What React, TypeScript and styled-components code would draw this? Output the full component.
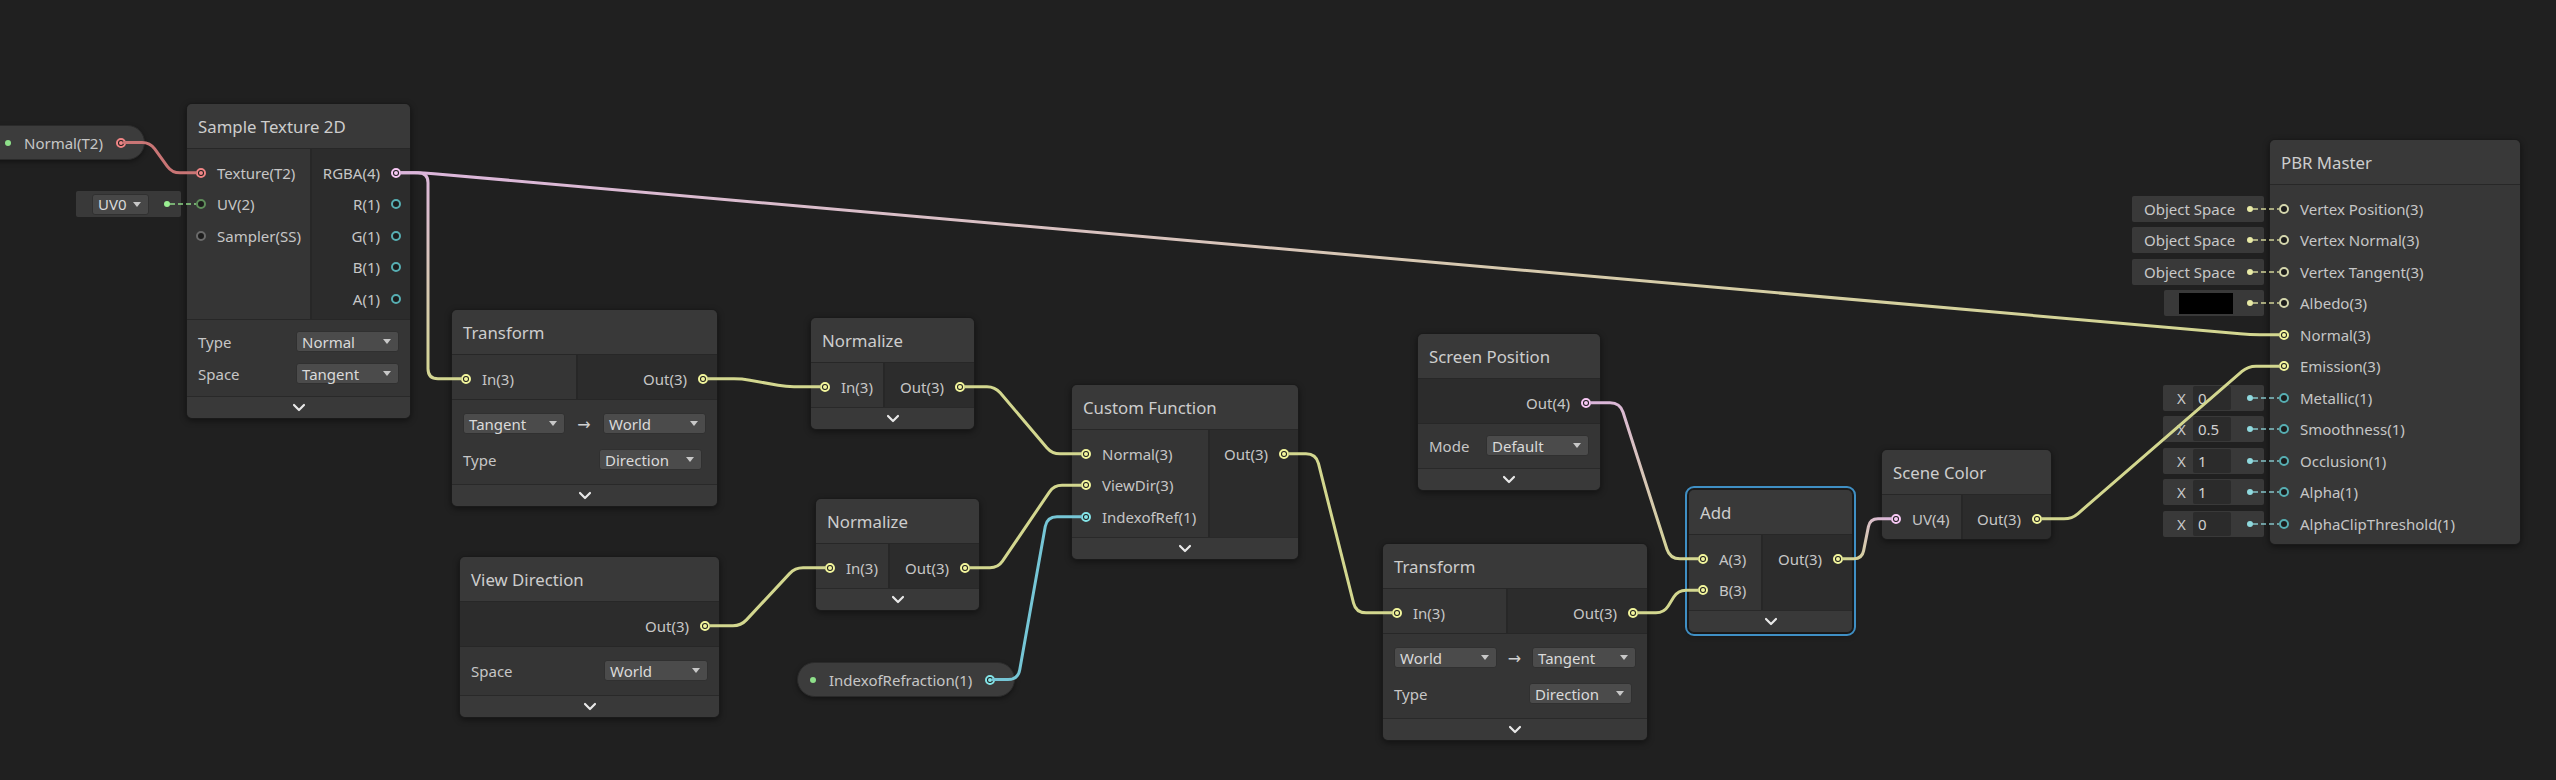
import React from "react";
import styled, { createGlobalStyle, css } from "styled-components";

type PT = "v1" | "v2" | "v3" | "v4" | "tex" | "ss";

const PORT: Record<PT, string> = {
  v1: "#84e4e7",
  v2: "#9aef92",
  v3: "#f2f59c",
  v4: "#f7c8f4",
  tex: "#f08585",
  ss: "#9a9a9a",
};
const DIM: Record<PT, string> = {
  v1: "#57aeb2",
  v2: "#5f8f5b",
  v3: "#d4d6ad",
  v4: "#c9a3c6",
  tex: "#b06060",
  ss: "#6a6a6a",
};
const WIRE: Record<PT, string> = {
  v1: "#76c6d6",
  v2: "#8ed489",
  v3: "#d3d78f",
  v4: "#dcb6dc",
  tex: "#c97575",
  ss: "#8a8a8a",
};

const GlobalStyle = createGlobalStyle`
  html, body { margin: 0; padding: 0; background: #202020; }
  body { font-family: "Noto Sans", "DejaVu Sans", sans-serif; }
  #root { width: 2556px; height: 780px; }
`;

const Canvas = styled.div`
  position: relative;
  width: 2556px;
  height: 780px;
  overflow: hidden;
  background: #202020;
`;

const NodeBox = styled.div<{ $x: number; $y: number; $w: number; $sel?: boolean }>`
  position: absolute;
  left: ${(p) => p.$x}px;
  top: ${(p) => p.$y}px;
  width: ${(p) => p.$w}px;
  box-sizing: border-box;
  border: 1px solid #1a1a1a;
  border-radius: 6px;
  background: #2c2c2c;
  box-shadow: 0 2px 6px rgba(0, 0, 0, 0.45);
  ${(p) =>
    p.$sel &&
    css`
      outline: 2px solid #3f8fc4;
      outline-offset: 1px;
    `}
`;

const NodeInner = styled.div`
  border-radius: 5px;
  overflow: hidden;
  display: flex;
  flex-direction: column;
`;

const Title = styled.div`
  height: 44px;
  border-bottom: 1px solid #272727;
  background: #393939;
  display: flex;
  align-items: center;
  padding-left: 11px;
  font-size: 16.8px;
  color: #cdcdcd;
  white-space: nowrap;
`;

const Ports = styled.div`
  display: flex;
`;

const InCol = styled.div<{ $w?: number; $solo?: boolean }>`
  ${(p) => (p.$w ? `flex: 0 0 ${p.$w - 1}px;` : "flex: 1;")}
  box-sizing: border-box;
  background: ${(p) => (p.$solo ? "#373737" : "#353535")};
  padding: 8px 0 4px;
  ${(p) => !p.$solo && "border-right: 2px solid #272727;"}
`;

const OutCol = styled.div`
  flex: 1;
  background: #2c2c2c;
  padding: 8px 0 4px;
`;

const PortRow = styled.div<{ $out?: boolean }>`
  height: 31.5px;
  display: flex;
  align-items: center;
  gap: 11px;
  padding: 0 9px;
  justify-content: ${(p) => (p.$out ? "flex-end" : "flex-start")};
  font-size: 15px;
  color: #c6c6c6;
  white-space: nowrap;
`;

const PortDot = styled.span<{ $c: string; $on?: boolean }>`
  flex: none;
  width: 10px;
  height: 10px;
  box-sizing: border-box;
  border-radius: 50%;
  border: 2px solid ${(p) => p.$c};
  background: #1c1c1c;
  position: relative;
  &::after {
    content: "";
    position: absolute;
    left: 1px;
    top: 1px;
    width: 4px;
    height: 4px;
    border-radius: 50%;
    background: ${(p) => (p.$on ? p.$c : "transparent")};
  }
`;

const Settings = styled.div`
  background: #353535;
  border-top: 1px solid #272727;
  padding: 6px 11px;
`;

const SettingRow = styled.div<{ $h: number }>`
  height: ${(p) => p.$h}px;
  display: flex;
  align-items: center;
  justify-content: space-between;
  font-size: 15px;
  color: #c6c6c6;
  white-space: nowrap;
`;

const Dropdown = styled.div<{ $w: number; $mr?: number }>`
  width: ${(p) => p.$w}px;
  height: 21px;
  box-sizing: border-box;
  margin-right: ${(p) => p.$mr ?? 0}px;
  display: flex;
  align-items: center;
  justify-content: space-between;
  padding: 0 7px 0 5px;
  background: #4b4b4b;
  border: 1px solid #303030;
  border-radius: 3px;
  font-size: 15px;
  color: #dadada;
  &::after {
    content: "";
    border-left: 4px solid transparent;
    border-right: 4px solid transparent;
    border-top: 5px solid #c8c8c8;
  }
`;

const Arrow = styled.span`
  font-size: 16px;
  color: #d0d0d0;
`;

const Collapse = styled.div`
  height: 21px;
  border-top: 1px solid #292929;
  background: #393939;
  display: flex;
  align-items: center;
  justify-content: center;
`;

const InlineColumn = styled.div`
  position: absolute;
  right: calc(100% + 6px);
  top: 53px;
  display: flex;
  flex-direction: column;
  align-items: flex-end;
`;

const InlineSlot = styled.div`
  height: 31.5px;
  display: flex;
  align-items: center;
`;

const InlineField = styled.div<{ $w: number; $pl?: number }>`
  position: relative;
  width: ${(p) => p.$w}px;
  height: 26px;
  box-sizing: border-box;
  background: #393939;
  border-radius: 2px;
  display: flex;
  align-items: center;
  padding-left: ${(p) => p.$pl ?? 0}px;
  font-size: 15px;
  color: #c8c8c8;
  white-space: nowrap;
`;

const Link = styled.span<{ $c: string }>`
  position: absolute;
  right: 11px;
  top: 10px;
  width: 6px;
  height: 6px;
  border-radius: 50%;
  background: ${(p) => p.$c};
  &::after {
    content: "";
    position: absolute;
    left: 6px;
    top: 2px;
    width: 26px;
    height: 2px;
    background: repeating-linear-gradient(90deg, ${(p) => p.$c} 0 5px, transparent 5px 8px);
    opacity: 0.65;
  }
`;

const Swatch = styled.span`
  margin-left: 15px;
  width: 54px;
  height: 21px;
  background: #000;
`;

const XLabel = styled.span`
  margin-left: 14px;
  width: 16px;
  color: #c8c8c8;
`;

const NumBox = styled.span`
  width: 38px;
  height: 24px;
  box-sizing: border-box;
  padding-left: 5px;
  display: flex;
  align-items: center;
  background: #2b2b2b;
  border-radius: 2px;
  color: #d0d0d0;
`;

const SmallDrop = styled(Dropdown)`
  margin-left: 16px;
  background: #474747;
`;

const Pill = styled.div<{ $x: number; $y: number; $w: number; $pl: number }>`
  position: absolute;
  left: ${(p) => p.$x}px;
  top: ${(p) => p.$y}px;
  width: ${(p) => p.$w}px;
  height: 35px;
  box-sizing: border-box;
  border-radius: 18px;
  background: #3c3c3c;
  border: 1px solid #2a2a2a;
  box-shadow: 0 2px 5px rgba(0, 0, 0, 0.4);
  display: flex;
  align-items: center;
  gap: 13px;
  padding: 0 20px 0 ${(p) => p.$pl}px;
  font-size: 15px;
  color: #c6c6c6;
  white-space: nowrap;
`;

const PillLabel = styled.span`
  flex: 1;
`;

const PropDot = styled.span`
  flex: none;
  width: 6px;
  height: 6px;
  border-radius: 50%;
  background: #8ee08a;
`;

const Wires = styled.svg`
  position: absolute;
  left: 0;
  top: 0;
  width: 2556px;
  height: 780px;
  pointer-events: none;
  z-index: 2;
`;

const Chevron = () => (
  <svg width="14" height="9" viewBox="0 0 14 9">
    <path d="M2 2 L7 7 L12 2" fill="none" stroke="#e8e8e8" strokeWidth="2.2" strokeLinecap="round" strokeLinejoin="round" />
  </svg>
);

interface PortDef {
  label: string;
  t: PT;
  on?: boolean;
  inline?: React.ReactNode;
}

interface NodeProps {
  x: number;
  y: number;
  w: number;
  title: string;
  inW?: number;
  inputs?: PortDef[];
  outputs?: PortDef[];
  collapse?: boolean;
  selected?: boolean;
  children?: React.ReactNode;
}

function GraphNode({ x, y, w, title, inW, inputs = [], outputs = [], collapse = true, selected, children }: NodeProps) {
  const hasInline = inputs.some((p) => p.inline);
  return (
    <NodeBox $x={x} $y={y} $w={w} $sel={selected}>
      {hasInline && (
        <InlineColumn>
          {inputs.map((p, i) => (
            <InlineSlot key={i}>{p.inline}</InlineSlot>
          ))}
        </InlineColumn>
      )}
      <NodeInner>
        <Title>{title}</Title>
        <Ports>
          {inputs.length > 0 && (
            <InCol $w={outputs.length ? inW : undefined} $solo={outputs.length === 0}>
              {inputs.map((p, i) => (
                <PortRow key={i}>
                  <PortDot $c={p.on ? PORT[p.t] : DIM[p.t]} $on={p.on} />
                  <span>{p.label}</span>
                </PortRow>
              ))}
            </InCol>
          )}
          {outputs.length > 0 && (
            <OutCol>
              {outputs.map((p, i) => (
                <PortRow key={i} $out>
                  <span>{p.label}</span>
                  <PortDot $c={p.on ? PORT[p.t] : DIM[p.t]} $on={p.on} />
                </PortRow>
              ))}
            </OutCol>
          )}
        </Ports>
        {children && <Settings>{children}</Settings>}
        {collapse && (
          <Collapse>
            <Chevron />
          </Collapse>
        )}
      </NodeInner>
    </NodeBox>
  );
}

type Pt = [number, number];

function wirePath(pts: Pt[], r = 10): string {
  let d = `M${pts[0][0]},${pts[0][1]}`;
  for (let i = 1; i < pts.length - 1; i++) {
    const [px, py] = pts[i - 1];
    const [cx, cy] = pts[i];
    const [nx, ny] = pts[i + 1];
    const l1 = Math.hypot(cx - px, cy - py);
    const l2 = Math.hypot(nx - cx, ny - cy);
    const rr = Math.min(r, l1 / 2, l2 / 2);
    const ax = cx - ((cx - px) / l1) * rr;
    const ay = cy - ((cy - py) / l1) * rr;
    const bx = cx + ((nx - cx) / l2) * rr;
    const by = cy + ((ny - cy) / l2) * rr;
    d += ` L${ax},${ay} Q${cx},${cy} ${bx},${by}`;
  }
  const last = pts[pts.length - 1];
  d += ` L${last[0]},${last[1]}`;
  return d;
}

interface Edge {
  pts: Pt[];
  from: PT;
  to: PT;
  r?: number;
}

const EDGES: Edge[] = [
  { pts: [[124, 142.5], [150, 142.5], [172, 172.75], [196, 172.75]], from: "tex", to: "tex", r: 8 },
  { pts: [[401, 172.75], [428, 172.75], [428, 378.75], [461, 378.75]], from: "v4", to: "v3" },
  { pts: [[401, 172.75], [424, 172.75], [2250, 334.75], [2279, 334.75]], from: "v4", to: "v3" },
  { pts: [[708, 378.75], [742, 378.75], [786, 386.75], [820, 386.75]], from: "v3", to: "v3", r: 8 },
  { pts: [[965, 386.75], [995, 386.75], [1052, 453.75], [1081, 453.75]], from: "v3", to: "v3", r: 8 },
  { pts: [[710, 625.75], [741, 625.75], [795, 567.75], [825, 567.75]], from: "v3", to: "v3", r: 8 },
  { pts: [[970, 567.75], [998, 567.75], [1054, 485.25], [1081, 485.25]], from: "v3", to: "v3", r: 8 },
  { pts: [[993, 679.5], [1018, 679.5], [1047, 516.75], [1081, 516.75]], from: "v1", to: "v1", r: 10 },
  { pts: [[1289, 453.75], [1316, 453.75], [1356, 612.75], [1392, 612.75]], from: "v3", to: "v3", r: 10 },
  { pts: [[1591, 402.75], [1620, 402.75], [1670, 558.75], [1698, 558.75]], from: "v4", to: "v3", r: 10 },
  { pts: [[1638, 612.75], [1664, 612.75], [1678, 590.25], [1698, 590.25]], from: "v3", to: "v3", r: 8 },
  { pts: [[1843, 558.75], [1862, 558.75], [1870, 518.75], [1891, 518.75]], from: "v3", to: "v4", r: 8 },
  { pts: [[2042, 518.75], [2072, 518.75], [2248, 366.25], [2279, 366.25]], from: "v3", to: "v3", r: 8 },
];

const objectSpace = (
  <InlineField $w={132} $pl={12}>
    Object Space
    <Link $c="#e8eaa6" />
  </InlineField>
);

const xField = (v: string) => (
  <InlineField $w={101}>
    <XLabel>X</XLabel>
    <NumBox>{v}</NumBox>
    <Link $c="#8fd9de" />
  </InlineField>
);

export default function App() {
  return (
    <>
      <GlobalStyle />
      <Canvas>
        <Pill $x={-30} $y={125} $w={175} $pl={34}>
          <PropDot />
          <PillLabel>Normal(T2)</PillLabel>
          <PortDot $c={PORT.tex} $on />
        </Pill>

        <Pill $x={797} $y={662} $w={218} $pl={12}>
          <PropDot />
          <PillLabel>IndexofRefraction(1)</PillLabel>
          <PortDot $c={PORT.v1} $on />
        </Pill>

        <GraphNode
          x={186}
          y={103}
          w={225}
          inW={125}
          title="Sample Texture 2D"
          inputs={[
            { label: "Texture(T2)", t: "tex", on: true },
            {
              label: "UV(2)",
              t: "v2",
              inline: (
                <InlineField $w={105}>
                  <SmallDrop $w={57}>UV0</SmallDrop>
                  <Link $c="#9aef92" />
                </InlineField>
              ),
            },
            { label: "Sampler(SS)", t: "ss" },
          ]}
          outputs={[
            { label: "RGBA(4)", t: "v4", on: true },
            { label: "R(1)", t: "v1" },
            { label: "G(1)", t: "v1" },
            { label: "B(1)", t: "v1" },
            { label: "A(1)", t: "v1" },
          ]}
        >
          <SettingRow $h={32}>
            <span>Type</span>
            <Dropdown $w={103}>Normal</Dropdown>
          </SettingRow>
          <SettingRow $h={32}>
            <span>Space</span>
            <Dropdown $w={103}>Tangent</Dropdown>
          </SettingRow>
        </GraphNode>

        <GraphNode
          x={451}
          y={309}
          w={267}
          inW={127}
          title="Transform"
          inputs={[{ label: "In(3)", t: "v3", on: true }]}
          outputs={[{ label: "Out(3)", t: "v3", on: true }]}
        >
          <SettingRow $h={36}>
            <Dropdown $w={102}>Tangent</Dropdown>
            <Arrow>→</Arrow>
            <Dropdown $w={103}>World</Dropdown>
          </SettingRow>
          <SettingRow $h={36}>
            <span>Type</span>
            <Dropdown $w={103} $mr={4}>
              Direction
            </Dropdown>
          </SettingRow>
        </GraphNode>

        <GraphNode
          x={810}
          y={317}
          w={165}
          inW={75}
          title="Normalize"
          inputs={[{ label: "In(3)", t: "v3", on: true }]}
          outputs={[{ label: "Out(3)", t: "v3", on: true }]}
        />

        <GraphNode x={459} y={556} w={261} title="View Direction" outputs={[{ label: "Out(3)", t: "v3", on: true }]}>
          <SettingRow $h={36}>
            <span>Space</span>
            <Dropdown $w={104}>World</Dropdown>
          </SettingRow>
        </GraphNode>

        <GraphNode
          x={815}
          y={498}
          w={165}
          inW={75}
          title="Normalize"
          inputs={[{ label: "In(3)", t: "v3", on: true }]}
          outputs={[{ label: "Out(3)", t: "v3", on: true }]}
        />

        <GraphNode
          x={1071}
          y={384}
          w={228}
          inW={139}
          title="Custom Function"
          inputs={[
            { label: "Normal(3)", t: "v3", on: true },
            { label: "ViewDir(3)", t: "v3", on: true },
            { label: "IndexofRef(1)", t: "v1", on: true },
          ]}
          outputs={[{ label: "Out(3)", t: "v3", on: true }]}
        />

        <GraphNode x={1417} y={333} w={184} title="Screen Position" outputs={[{ label: "Out(4)", t: "v4", on: true }]}>
          <SettingRow $h={32}>
            <span>Mode</span>
            <Dropdown $w={103}>Default</Dropdown>
          </SettingRow>
        </GraphNode>

        <GraphNode
          x={1382}
          y={543}
          w={266}
          inW={126}
          title="Transform"
          inputs={[{ label: "In(3)", t: "v3", on: true }]}
          outputs={[{ label: "Out(3)", t: "v3", on: true }]}
        >
          <SettingRow $h={36}>
            <Dropdown $w={103}>World</Dropdown>
            <Arrow>→</Arrow>
            <Dropdown $w={104}>Tangent</Dropdown>
          </SettingRow>
          <SettingRow $h={36}>
            <span>Type</span>
            <Dropdown $w={103} $mr={4}>
              Direction
            </Dropdown>
          </SettingRow>
        </GraphNode>

        <GraphNode
          x={1688}
          y={489}
          w={165}
          inW={75}
          title="Add"
          selected
          inputs={[
            { label: "A(3)", t: "v3", on: true },
            { label: "B(3)", t: "v3", on: true },
          ]}
          outputs={[{ label: "Out(3)", t: "v3", on: true }]}
        />

        <GraphNode
          x={1881}
          y={449}
          w={171}
          inW={82}
          title="Scene Color"
          collapse={false}
          inputs={[{ label: "UV(4)", t: "v4", on: true }]}
          outputs={[{ label: "Out(3)", t: "v3", on: true }]}
        />

        <GraphNode
          x={2269}
          y={139}
          w={252}
          title="PBR Master"
          collapse={false}
          inputs={[
            { label: "Vertex Position(3)", t: "v3", inline: objectSpace },
            { label: "Vertex Normal(3)", t: "v3", inline: objectSpace },
            { label: "Vertex Tangent(3)", t: "v3", inline: objectSpace },
            {
              label: "Albedo(3)",
              t: "v3",
              inline: (
                <InlineField $w={100}>
                  <Swatch />
                  <Link $c="#e8eaa6" />
                </InlineField>
              ),
            },
            { label: "Normal(3)", t: "v3", on: true },
            { label: "Emission(3)", t: "v3", on: true },
            { label: "Metallic(1)", t: "v1", inline: xField("0") },
            { label: "Smoothness(1)", t: "v1", inline: xField("0.5") },
            { label: "Occlusion(1)", t: "v1", inline: xField("1") },
            { label: "Alpha(1)", t: "v1", inline: xField("1") },
            { label: "AlphaClipThreshold(1)", t: "v1", inline: xField("0") },
          ]}
        />

        <Wires viewBox="0 0 2556 780">
          <defs>
            {EDGES.map((e, i) =>
              e.from !== e.to ? (
                <linearGradient
                  key={i}
                  id={`g${i}`}
                  gradientUnits="userSpaceOnUse"
                  x1={e.pts[0][0]}
                  y1={e.pts[0][1]}
                  x2={e.pts[e.pts.length - 1][0]}
                  y2={e.pts[e.pts.length - 1][1]}
                >
                  <stop offset="0" stopColor={WIRE[e.from]} />
                  <stop offset="1" stopColor={WIRE[e.to]} />
                </linearGradient>
              ) : null
            )}
          </defs>
          {EDGES.map((e, i) => (
            <path
              key={i}
              d={wirePath(e.pts, e.r ?? 10)}
              fill="none"
              stroke={e.from !== e.to ? `url(#g${i})` : WIRE[e.from]}
              strokeWidth={3}
              strokeLinecap="round"
              strokeLinejoin="round"
            />
          ))}
        </Wires>
      </Canvas>
    </>
  );
}
